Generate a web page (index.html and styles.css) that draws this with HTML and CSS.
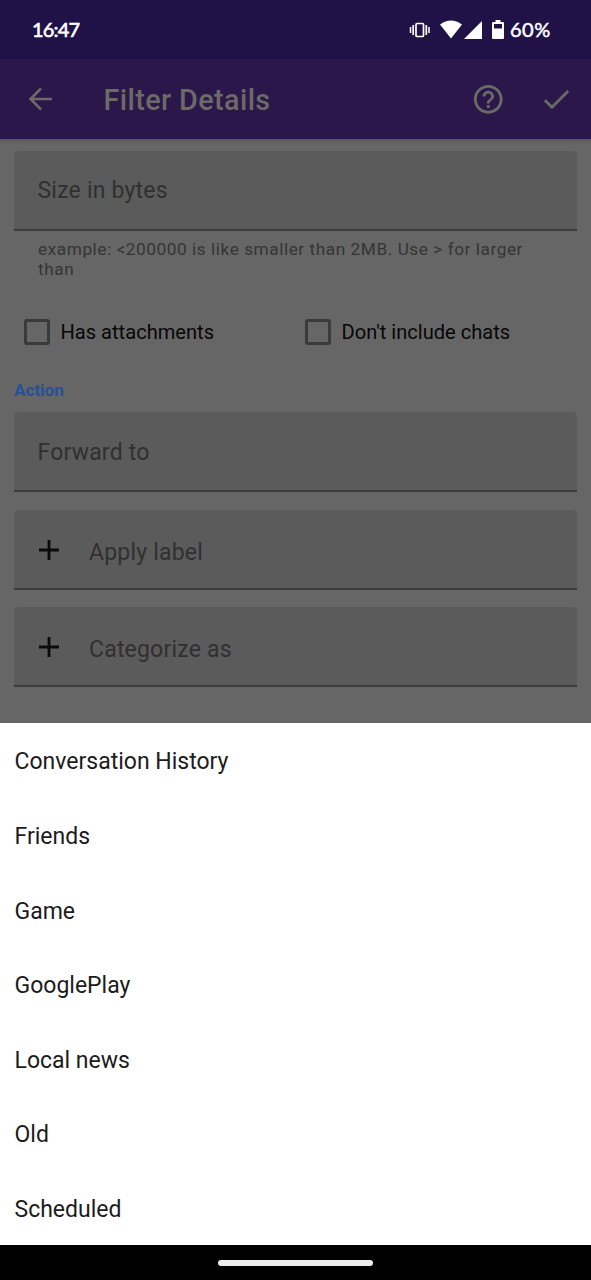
FILE: index.html
```html
<!DOCTYPE html>
<html lang="en">
<head>
<meta charset="utf-8">
<title>Filter Details</title>
<link rel="stylesheet" href="styles.css">
</head>
<body>
<div class="screen">
  <header class="status">
    <span class="clock">16:47</span>
    <svg class="vibrate" width="22" height="16" viewBox="0 0 22 16" fill="none" stroke="#fff"><path d="M1.500 5v6M20 5v6" stroke-width="1.500"/><path d="M4.200 3v10M17.300 3v10" stroke-width="1.700"/><rect x="7" y="1.500" width="7.500" height="13" rx="1" stroke-width="1.700"/></svg>
    <svg class="wifi" width="22" height="19" viewBox="0 0 22 19" fill="#fff"><path d="M0 4.500Q11-3.500 22 4.500L11 18.500Z"/></svg>
    <svg class="signal" width="18" height="18" viewBox="0 0 18 18" fill="#fff"><path d="M18 0v18H0z"/></svg>
    <svg class="battery" width="12" height="19" viewBox="0 0 12 19"><path d="M3.500 0h5v2H11q1 0 1 1v15q0 1-1 1H1q-1 0-1-1V3q0-1 1-1h2.500z" fill="#fff"/><path d="M2 4h8v4.500H2z" fill="#201147"/></svg>
    <span class="percent">60%</span>
  </header>
  <nav class="appbar">
    <svg class="back" width="24" height="24" viewBox="0 0 24 24" fill="none" stroke="#6c6a67" stroke-width="2.500"><path d="M13 1.500 2.500 12 13 22.500M2.500 12H24"/></svg>
    <h1 class="title">Filter Details</h1>
    <svg class="help" width="34.500" height="34.500" viewBox="0 0 24 24" fill="#6c6a67"><path d="M11 18h2v-2h-2v2zm1-16C6.480 2 2 6.480 2 12s4.480 10 10 10 10-4.480 10-10S17.520 2 12 2zm0 18c-4.410 0-8-3.590-8-8s3.590-8 8-8 8 3.590 8 8-3.590 8-8 8zm0-14c-2.210 0-4 1.790-4 4h2c0-1.100.900-2 2-2s2 .900 2 2c0 2-3 1.750-3 5h2c0-2.250 3-2.500 3-5 0-2.210-1.790-4-4-4z"/></svg>
    <svg class="done" width="34.500" height="34.500" viewBox="0 0 24 24" fill="#6c6a67"><path d="M9 16.170 4.830 12l-1.420 1.410L9 19 21 7l-1.410-1.410z"/></svg>
  </nav>
  <main class="form">
    <div class="field">Size in bytes</div>
    <p class="hint">example: &lt;200000 is like smaller than 2MB. Use &gt; for larger than</p>
    <div class="checks">
      <label class="check"><span class="box"></span><span class="check-text">Has attachments</span></label>
      <label class="check"><span class="box"></span><span class="check-text">Don't include chats</span></label>
    </div>
    <h2 class="section">Action</h2>
    <div class="field forward">Forward to</div>
    <div class="field picker"><svg class="plus" width="20" height="20" viewBox="0 0 20 20"><path d="M10 0v20M0 10h20" stroke="#0b0b0b" stroke-width="2.800"/></svg><span class="apply">Apply label</span></div>
    <div class="field picker"><svg class="plus" width="20" height="20" viewBox="0 0 20 20"><path d="M10 0v20M0 10h20" stroke="#0b0b0b" stroke-width="2.800"/></svg><span class="categorize">Categorize as</span></div>
  </main>
  <ul class="sheet">
    <li>Conversation History</li>
    <li>Friends</li>
    <li>Game</li>
    <li>GooglePlay</li>
    <li>Local news</li>
    <li>Old</li>
    <li>Scheduled</li>
  </ul>
  <footer class="gesture"><span class="handle"></span></footer>
</div>
</body>
</html>
```
FILE: styles.css
```css
* { box-sizing: border-box; margin: 0; padding: 0; }
body { font-family: Roboto, sans-serif; background: #000; }
.screen { width: 591px; height: 1280px; display: flex; flex-direction: column; overflow: hidden; }
.screen svg { display: block; flex: none; }
.status { height: 59px; flex: none; background: #201147; color: #fff; display: flex; align-items: center; padding-left: 32px; }
.clock { width: 377px; font: 400 20px/24px Lato, sans-serif; letter-spacing: -.8px; -webkit-text-stroke: .6px #fff; padding-bottom: 1px; }
.wifi { margin-left: 9px; }
.signal { margin-left: 2px; margin-top: 1px; }
.battery { margin-left: 10px; }
.percent { margin-left: 6px; font: 400 20px/24px Lato, sans-serif; letter-spacing: .5px; -webkit-text-stroke: .5px #fff; padding-bottom: 1px; }
.appbar { height: 80px; flex: none; background: #2b174a; display: flex; align-items: center; padding-left: 28px; }
.title { width: 366px; margin-left: 51.500px; padding-top: 2px; font-size: 28.750px; font-weight: 500; line-height: 34px; letter-spacing: .4px; color: #6c6a67; white-space: nowrap; }
.help { margin-left: 1px; }
.done { margin-left: 34px; }
.form { height: 584px; flex: none; background: linear-gradient(#5c5b5c, #666 5px); padding: 12px 14px 0; color: #303030; letter-spacing: .2px; }
.field { height: 80px; background: #5b5b5b; border-bottom: 2px solid #3c3c3c; border-radius: 5px 5px 0 0; padding: 2px 23.500px 0; display: flex; align-items: center; font-size: 23px; line-height: 28px; }
.forward { padding-top: 3px; }
.hint { padding: 8px 24px 0; height: 50px; font-size: 17.250px; line-height: 20px; letter-spacing: .54px; color: #353535; }
.checks { display: grid; grid-template-columns: 281px 281px; padding: 36px 0 0 10px; height: 69px; }
.check { display: flex; align-items: center; height: 29px; color: #070707; font-size: 20.100px; line-height: 26px; letter-spacing: 0; }
.box { width: 26px; height: 26px; border: 3px solid #3a3a3a; border-radius: 3px; margin-right: 10.500px; }
.section { height: 62px; padding-top: 29px; font-size: 17.250px; line-height: 22px; font-weight: 700; letter-spacing: -.1px; color: #27509a; }
.picker { margin-top: 17.500px; }
.plus { margin-left: 1px; }
.picker span { margin-left: 30.500px; padding-top: 6px; }
.sheet { height: 522px; flex: none; background: #fff; list-style: none; padding-left: 14.500px; }
.sheet li { height: 74.640px; display: flex; align-items: center; padding-top: 3px; font-size: 23px; color: #1c1c1c; letter-spacing: 0; }
.gesture { flex: 1; background: #000; display: flex; justify-content: center; padding-top: 15px; }
.handle { width: 155px; height: 5.500px; border-radius: 3px; background: #ececec; }
```
